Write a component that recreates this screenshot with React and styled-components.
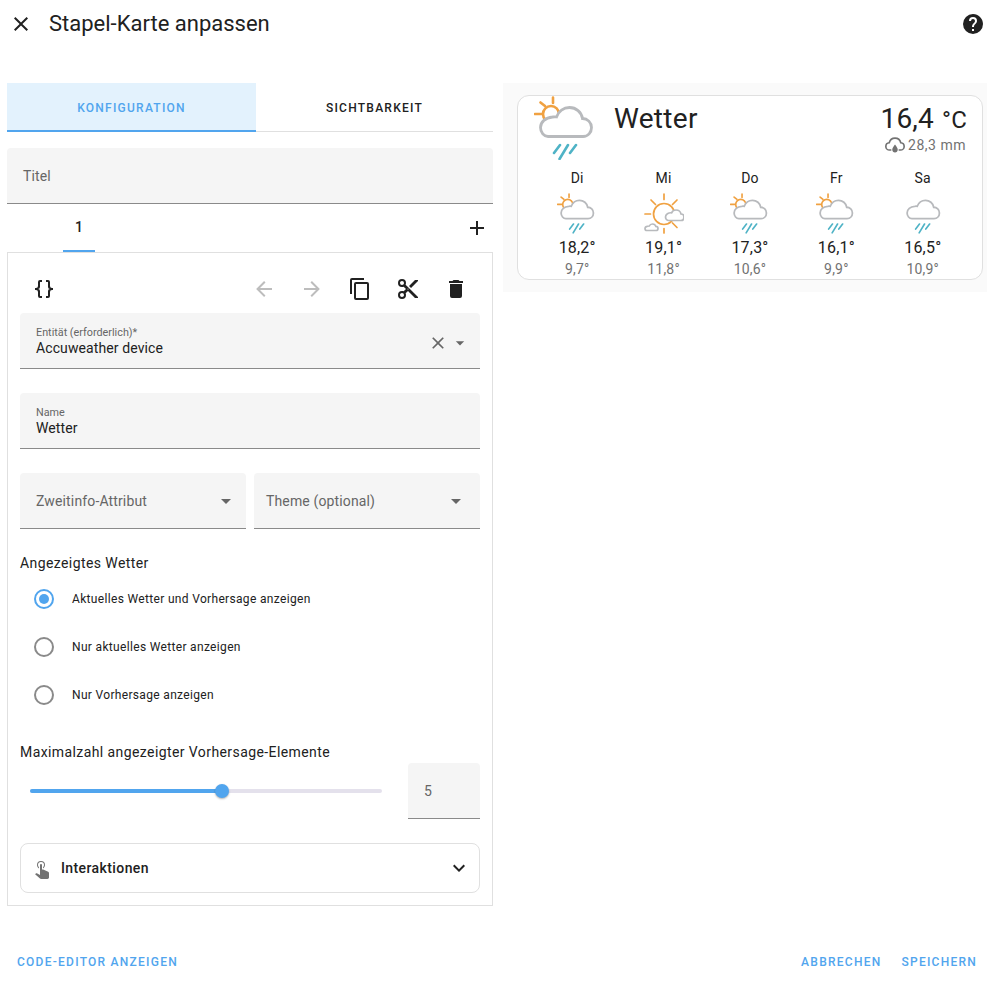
import React from "react";
import styled, { createGlobalStyle } from "styled-components";

const PRIMARY = "#51a5ee";

const GlobalStyle = createGlobalStyle`
  html, body {
    margin: 0;
    padding: 0;
    background: #fff;
    font-family: Roboto, "Liberation Sans", sans-serif;
    color: #212121;
  }
  * { box-sizing: border-box; }
`;

const Page = styled.div`
  width: 987px;
  height: 989px;
  display: flex;
  flex-direction: column;
  overflow: hidden;
`;
const Header = styled.header`
  height: 48px;
  display: flex;
  align-items: center;
  padding: 0 2px 1px 9px;
  margin-bottom: 35px;
`;
const HeaderTitle = styled.h1`
  flex: 1;
  margin: 0 0 0 16px;
  font-size: 22px;
  font-weight: 400;
  line-height: 28px;
`;
const IconBox = styled.span`
  width: ${({ $box }) => $box || 24}px;
  height: ${({ $box }) => $box || 24}px;
  display: inline-flex;
  align-items: center;
  justify-content: center;
  flex: none;
  color: ${({ $color }) => $color || "#212121"};
`;
const Main = styled.main`
  display: flex;
  align-items: flex-start;
  gap: 10px;
  padding-left: 7px;
`;
const LeftColumn = styled.section`
  width: 486px;
  display: flex;
  flex-direction: column;
`;
const Tabs = styled.div`
  display: flex;
  height: 49px;
  border-bottom: 1px solid #e0e0e0;
  margin-bottom: 16px;
`;
const Tab = styled.div`
  width: ${({ $width }) => $width}px;
  height: 49px;
  display: flex;
  align-items: center;
  justify-content: center;
  font-size: 12px;
  font-weight: 500;
  letter-spacing: 1.25px;
  text-transform: uppercase;
  color: ${({ $active }) => ($active ? PRIMARY : "#212121")};
  background: ${({ $active }) => ($active ? "#e3f2fd" : "transparent")};
  border-bottom: ${({ $active }) => ($active ? `2px solid ${PRIMARY}` : "0")};
  padding-top: ${({ $active }) => ($active ? "2px" : "0")};
`;
const Field = styled.div`
  height: 56px;
  background: #f5f5f5;
  border-radius: 4px 4px 0 0;
  border-bottom: 1px solid #8a8a8a;
  padding: 0 ${({ $padRight }) => $padRight ?? 16}px 0 ${({ $padLeft }) => $padLeft ?? 16}px;
  display: flex;
  align-items: center;
  justify-content: space-between;
  flex: ${({ $grow }) => ($grow ? 1 : "none")};
`;
const FieldStack = styled.div`
  display: flex;
  flex-direction: column;
  padding-top: 2px;
`;
const FloatLabel = styled.span`
  font-size: 10.8px;
  line-height: 14px;
  color: #666;
`;
const FieldValue = styled.span`
  font-size: 14px;
  line-height: 18px;
  letter-spacing: 0.1px;
  margin-top: -1px;
  color: #212121;
`;
const Placeholder = styled.span`
  font-size: 14px;
  letter-spacing: 0.14px;
  color: #666;
`;
const FieldIcons = styled.div`
  display: flex;
  align-items: center;
  gap: 1px;
  margin-right: -7px;
  margin-top: 4px;
`;
const CardTabs = styled.div`
  height: 48px;
  display: flex;
  align-items: center;
  justify-content: space-between;
  padding: 0 4px 0 56px;
`;
const CardTab = styled.div`
  width: 32px;
  height: 48px;
  display: flex;
  align-items: center;
  justify-content: center;
  font-size: 14px;
  font-weight: 500;
  border-bottom: 2px solid ${PRIMARY};
`;
const EditorCard = styled.div`
  height: 654px;
  border: 1px solid #e0e0e0;
  padding: 12px 12px 0;
  display: flex;
  flex-direction: column;
`;
const Toolbar = styled.div`
  height: 48px;
  display: flex;
  align-items: center;
  padding: 0 0 0 12px;
`;
const ToolbarRight = styled.div`
  margin-left: auto;
  display: flex;
  align-items: center;
`;
const Row = styled.div`
  display: flex;
  gap: 8px;
`;
const Stacked = styled.div`
  margin-top: 24px;
`;
const SectionLabel = styled.div`
  font-size: 14px;
  line-height: 20px;
  letter-spacing: 0.41px;
  margin-top: ${({ $top }) => $top}px;
`;
const RadioList = styled.div`
  display: flex;
  flex-direction: column;
  margin-top: 2px;
`;
const RadioRow = styled.div`
  height: 48px;
  display: flex;
  align-items: center;
  padding-left: 14px;
  gap: 18px;
  font-size: 12px;
  letter-spacing: 0.33px;
`;
const RadioCircle = styled.span`
  width: 20px;
  height: 20px;
  border-radius: 50%;
  border: 2px solid ${({ $checked }) => ($checked ? PRIMARY : "#8a8a8a")};
  display: flex;
  align-items: center;
  justify-content: center;
  flex: none;
  &::after {
    content: "";
    width: 10px;
    height: 10px;
    border-radius: 50%;
    background: ${({ $checked }) => ($checked ? PRIMARY : "transparent")};
  }
`;
const SliderRow = styled.div`
  display: flex;
  align-items: center;
  padding-left: 10px;
  gap: 26px;
  margin-top: 1px;
`;
const SliderTrack = styled.div`
  position: relative;
  width: 352px;
  height: 4px;
  border-radius: 2px;
  background: #e4e1ec;
`;
const SliderFill = styled.div`
  height: 4px;
  border-radius: 2px;
  background: ${PRIMARY};
`;
const SliderThumb = styled.div`
  position: absolute;
  top: -5px;
  width: 14px;
  height: 14px;
  margin-left: -7px;
  border-radius: 50%;
  background: ${PRIMARY};
  box-shadow: 0 1px 2px rgba(0, 0, 0, 0.3);
`;
const NumberField = styled(Field)`
  width: 72px;
  font-size: 14px;
  color: #666;
`;
const Expansion = styled.div`
  height: 50px;
  margin-top: 24px;
  border: 1px solid #e0e0e0;
  border-radius: 8px;
  display: flex;
  align-items: center;
  padding: 0 8px 0 9px;
`;
const ExpansionTitle = styled.span`
  flex: 1;
  margin-left: 7px;
  font-size: 14px;
  font-weight: 500;
  letter-spacing: 0.4px;
`;
const Footer = styled.footer`
  margin-top: auto;
  height: 54px;
  display: flex;
  align-items: center;
  padding: 0 10px 0 17px;
`;
const FooterRight = styled.div`
  margin-left: auto;
  display: flex;
  gap: 20px;
`;
const TextButton = styled.span`
  font-size: 12px;
  font-weight: 500;
  letter-spacing: 1.25px;
  text-transform: uppercase;
  color: ${PRIMARY};
`;
const Preview = styled.aside`
  width: 484px;
  height: 209px;
  background: #fafafa;
  padding: 12px 4px 12px 14px;
`;
const WeatherCard = styled.article`
  height: 185px;
  background: #fff;
  border: 1px solid #e0e0e0;
  border-radius: 12px;
  display: flex;
  flex-direction: column;
`;
const WeatherTop = styled.div`
  height: 66px;
  display: flex;
  padding: 0 15px 0 16px;
`;
const WeatherName = styled.div`
  margin-left: 20px;
  margin-top: 7px;
  font-size: 28px;
  line-height: 32px;
  letter-spacing: 0.3px;
  flex: 1;
`;
const WeatherNow = styled.div`
  display: flex;
  flex-direction: column;
  align-items: flex-end;
  padding-top: 7px;
`;
const NowTemp = styled.div`
  font-size: 28px;
  line-height: 32px;
  letter-spacing: 0.2px;
`;
const NowUnit = styled.span`
  font-size: 24px;
  margin-left: 8px;
`;
const NowRain = styled.div`
  display: flex;
  align-items: center;
  gap: 2px;
  margin: -2px 1px 0 0;
  font-size: 14px;
  line-height: 16px;
  letter-spacing: 0.5px;
  color: #727272;
`;
const Forecast = styled.div`
  display: flex;
  justify-content: space-between;
  padding: 6px 16px 0 16px;
`;
const Day = styled.div`
  width: 86.4px;
  display: flex;
  flex-direction: column;
  align-items: center;
`;
const DayName = styled.div`
  font-size: 14px;
  line-height: 20px;
  letter-spacing: 0.2px;
  margin-bottom: 5px;
`;
const DayIcon = styled.div`
  height: 42px;
  margin-left: ${({ $offset }) => $offset || 0}px;
`;
const DayHigh = styled.div`
  font-size: 16px;
  line-height: 18px;
  letter-spacing: 0.2px;
  margin-top: 4px;
`;
const DayLow = styled.div`
  font-size: 14px;
  line-height: 18px;
  letter-spacing: 0.2px;
  margin-top: 3px;
  color: #727272;
`;

const Mdi = ({ d, size = 24, box, color }) => (
  <IconBox $box={box || size} $color={color}>
    <svg width={size} height={size} viewBox="0 0 24 24" fill="currentColor">
      <path d={d} />
    </svg>
  </IconBox>
);

const paths = {
  close: "M19,6.41L17.59,5L12,10.59L6.41,5L5,6.41L10.59,12L5,17.59L6.41,19L12,13.41L17.59,19L19,17.59L13.41,12L19,6.41Z",
  help: "M15.07,11.25L14.17,12.17C13.45,12.89 13,13.5 13,15H11V14.5C11,13.39 11.45,12.39 12.17,11.67L13.41,10.41C13.78,10.05 14,9.55 14,9C14,7.89 13.1,7 12,7A2,2 0 0,0 10,9H8A4,4 0 0,1 12,5A4,4 0 0,1 16,9C16,9.88 15.64,10.67 15.07,11.25M13,19H11V17H13M12,2A10,10 0 0,0 2,12A10,10 0 0,0 12,22A10,10 0 0,0 22,12C22,6.47 17.5,2 12,2Z",
  plus: "M19,13H13V19H11V13H5V11H11V5H13V11H19V13Z",
  braces: "M8,3A2,2 0 0,0 6,5V9A2,2 0 0,1 4,11H3V13H4A2,2 0 0,1 6,15V19A2,2 0 0,0 8,21H10V19H8V14A2,2 0 0,0 6,12A2,2 0 0,0 8,10V5H10V3M16,3A2,2 0 0,1 18,5V9A2,2 0 0,0 20,11H21V13H20A2,2 0 0,0 18,15V19A2,2 0 0,1 16,21H14V19H16V14A2,2 0 0,1 18,12A2,2 0 0,1 16,10V5H14V3H16Z",
  left: "M20,11V13H8L13.5,18.5L12.08,19.92L4.16,12L12.08,4.08L13.5,5.5L8,11H20Z",
  right: "M4,11V13H16L10.5,18.5L11.92,19.92L19.84,12L11.92,4.08L10.5,5.5L16,11H4Z",
  copy: "M19,21H8V7H19M19,5H8A2,2 0 0,0 6,7V21A2,2 0 0,0 8,23H19A2,2 0 0,0 21,21V7A2,2 0 0,0 19,5M16,1H4A2,2 0 0,0 2,3V17H4V3H16V1Z",
  cut: "M19,3L13,9L15,11L22,4V3M12,12.5A0.5,0.5 0 0,1 11.5,12A0.5,0.5 0 0,1 12,11.5A0.5,0.5 0 0,1 12.5,12A0.5,0.5 0 0,1 12,12.5M6,20A2,2 0 0,1 4,18C4,16.89 4.9,16 6,16A2,2 0 0,1 8,18C8,19.11 7.1,20 6,20M6,8A2,2 0 0,1 4,6C4,4.89 4.9,4 6,4A2,2 0 0,1 8,6C8,7.11 7.1,8 6,8M9.64,7.64C9.87,7.14 10,6.59 10,6A4,4 0 0,0 6,2A4,4 0 0,0 2,6A4,4 0 0,0 6,10C6.59,10 7.14,9.87 7.64,9.64L10,12L7.64,14.36C7.14,14.13 6.59,14 6,14A4,4 0 0,0 2,18A4,4 0 0,0 6,22A4,4 0 0,0 10,18C10,17.41 9.87,16.86 9.64,16.36L12,14L19,21H22V20L9.64,7.64Z",
  trash: "M19,4H15.5L14.5,3H9.5L8.5,4H5V6H19M6,19A2,2 0 0,0 8,21H16A2,2 0 0,0 18,19V7H6V19Z",
  menuDown: "M7,10L12,15L17,10H7Z",
  chevron: "M7.41,8.58L12,13.17L16.59,8.58L18,10L12,16L6,10L7.41,8.58Z",
  tap: "M10,9A1,1 0 0,1 11,8A1,1 0 0,1 12,9V13.47L13.21,13.6L18.15,15.79C18.68,16.03 19,16.56 19,17.14V21.5C18.97,22.32 18.32,22.97 17.5,23H11C10.62,23 10.26,22.85 10,22.57L5.1,18.37L5.84,17.6C6.03,17.39 6.3,17.28 6.58,17.28H6.8L10,19V9M11,5A4,4 0 0,1 15,9C15,10.5 14.2,11.77 13,12.46V11.24C13.61,10.69 14,9.89 14,9A3,3 0 0,0 11,6A3,3 0 0,0 8,9C8,9.89 8.39,10.69 9,11.24V12.46C7.8,11.77 7,10.5 7,9A4,4 0 0,1 11,5Z",
};

const CLOUD = "M14 40.5H49C54 40.5 57.5 36.5 57.5 31.5C57.5 26.5 53.5 22.5 48.5 22.5C47.5 16 42 11.5 35.5 11.5C29.5 11.5 24.5 15.5 22.5 21C21.5 20.8 20 20.8 18.5 21C11.5 21.5 6.5 26 6.5 31.5C6.5 36.5 10 40.5 14 40.5Z";

// the rainy family, drawn once and scaled for the forecast
const RainyIcon = ({ width = 60, sun = true }) => (
  <svg width={width} height={(width * 64) / 60} viewBox="0 0 60 64" fill="none" strokeLinecap="round">
    {sun && (
      <g stroke="#f0a141" strokeWidth="2.6">
        <circle cx="17" cy="18" r="8" />
        <path d="M19 1.5V7M6.5 6.5L11 10M0.8 18H8" />
      </g>
    )}
    <path d={CLOUD} fill="#fff" stroke="#b8babd" strokeWidth="2.8" />
    <g stroke="#4fb3c6" strokeWidth="2.6">
      <path d="M20 57L26 49M25.5 63L34 49M36 57L42 49" />
    </g>
  </svg>
);

const SunnyCloudyIcon = () => (
  <svg width="40" height="41" viewBox="0 0 40 41" fill="none" strokeLinecap="round">
    <g stroke="#f0a141" strokeWidth="1.7">
      <circle cx="20" cy="21" r="10.5" />
      <path d="M20 1V6.5M20 35.5V40M1 21H6.5M7 7L11.5 11.5M33 7L28.5 11.5M28.5 30L33 34.5" />
    </g>
    <path
      d="M24.5 27.5H37C39 27.5 40 26 40 24C40 22.3 38.7 21 37 21C36.5 18.5 34.5 17 32 17C30 17 28.4 18 27.6 19.8C24.5 19.5 21.5 21.3 21.5 24C21.5 26 23 27.5 24.5 27.5Z"
      fill="#fff"
      stroke="#b8babd"
      strokeWidth="1.7"
    />
    <path
      d="M3 37.5H12C13.2 37.5 14 36.6 14 35.4C14 34.2 13 33.3 11.8 33.3C11.3 31.7 10 31 8.5 31C7 31 5.8 31.8 5.3 33C3 33 1 34 1 35.4C1 36.6 2 37.5 3 37.5Z"
      fill="#fff"
      stroke="#b8babd"
      strokeWidth="1.7"
    />
  </svg>
);

const RainMeter = () => (
  <svg width="22" height="22" viewBox="0 0 24 24" fill="none">
    <path
      d="M8 17.5H6C3.8 17.5 2 15.7 2 13.5C2 11.4 3.6 9.7 5.7 9.5C6.5 6.6 9 4.5 12 4.5C15 4.5 17.6 6.6 18.3 9.5C20.4 9.7 22 11.4 22 13.5C22 15.7 20.2 17.5 18 17.5H16"
      stroke="#727272"
      strokeWidth="1.8"
    />
    <path
      d="M12 11.5C13.8 14 15 15.5 15 17.2C15 18.9 13.7 20.2 12 20.2C10.3 20.2 9 18.9 9 17.2C9 15.5 10.2 14 12 11.5Z"
      fill="#727272"
    />
  </svg>
);

const days = [
  { name: "Di", high: "18,2°", low: "9,7°", offset: -2, icon: <RainyIcon width={38} /> },
  { name: "Mi", high: "19,1°", low: "11,8°", icon: <SunnyCloudyIcon /> },
  { name: "Do", high: "17,3°", low: "10,6°", offset: -2, icon: <RainyIcon width={38} /> },
  { name: "Fr", high: "16,1°", low: "9,9°", offset: -2, icon: <RainyIcon width={38} /> },
  { name: "Sa", high: "16,5°", low: "10,9°", offset: -2, icon: <RainyIcon width={38} sun={false} /> },
];

const radios = [
  { label: "Aktuelles Wetter und Vorhersage anzeigen", checked: true },
  { label: "Nur aktuelles Wetter anzeigen" },
  { label: "Nur Vorhersage anzeigen" },
];

const sliderValue = 54.5;

const App = () => {
  return (
    <Page>
      <GlobalStyle />
      <Header>
        <Mdi d={paths.close} />
        <HeaderTitle>Stapel-Karte anpassen</HeaderTitle>
        <Mdi d={paths.help} />
      </Header>
      <Main>
        <LeftColumn>
          <Tabs>
            <Tab $active $width={249}>Konfiguration</Tab>
            <Tab $width={237}>Sichtbarkeit</Tab>
          </Tabs>
          <Field>
            <Placeholder>Titel</Placeholder>
          </Field>
          <CardTabs>
            <CardTab>1</CardTab>
            <Mdi d={paths.plus} />
          </CardTabs>
          <EditorCard>
            <Toolbar>
              <Mdi d={paths.braces} />
              <ToolbarRight>
                <Mdi d={paths.left} box={48} color="#bdbdbd" />
                <Mdi d={paths.right} box={48} color="#bdbdbd" />
                <Mdi d={paths.copy} box={48} />
                <Mdi d={paths.cut} box={48} />
                <Mdi d={paths.trash} box={48} />
              </ToolbarRight>
            </Toolbar>
            <Field>
              <FieldStack>
                <FloatLabel>Entität (erforderlich)*</FloatLabel>
                <FieldValue>Accuweather device</FieldValue>
              </FieldStack>
              <FieldIcons>
                <Mdi d={paths.close} size={20} color="#666" />
                <Mdi d={paths.menuDown} size={20} box={22} color="#666" />
              </FieldIcons>
            </Field>
            <Stacked>
              <Field>
                <FieldStack>
                  <FloatLabel>Name</FloatLabel>
                  <FieldValue>Wetter</FieldValue>
                </FieldStack>
              </Field>
            </Stacked>
            <Stacked>
              <Row>
                <Field $grow $padRight={8}>
                  <Placeholder>Zweitinfo-Attribut</Placeholder>
                  <Mdi d={paths.menuDown} size={24} color="#666" />
                </Field>
                <Field $grow $padLeft={12} $padRight={12}>
                  <Placeholder>Theme (optional)</Placeholder>
                  <Mdi d={paths.menuDown} size={24} color="#666" />
                </Field>
              </Row>
            </Stacked>
            <SectionLabel $top={24}>Angezeigtes Wetter</SectionLabel>
            <RadioList>
              {radios.map((radio) => (
                <RadioRow key={radio.label}>
                  <RadioCircle $checked={radio.checked} />
                  {radio.label}
                </RadioRow>
              ))}
            </RadioList>
            <SectionLabel $top={23}>Maximalzahl angezeigter Vorhersage-Elemente</SectionLabel>
            <SliderRow>
              <SliderTrack>
                <SliderFill style={{ width: `${sliderValue}%` }} />
                <SliderThumb style={{ left: `${sliderValue}%` }} />
              </SliderTrack>
              <NumberField>5</NumberField>
            </SliderRow>
            <Expansion>
              <Mdi d={paths.tap} color="#727272" />
              <ExpansionTitle>Interaktionen</ExpansionTitle>
              <Mdi d={paths.chevron} />
            </Expansion>
          </EditorCard>
        </LeftColumn>
        <Preview>
          <WeatherCard>
            <WeatherTop>
              <RainyIcon />
              <WeatherName>Wetter</WeatherName>
              <WeatherNow>
                <NowTemp>
                  16,4<NowUnit>°C</NowUnit>
                </NowTemp>
                <NowRain>
                  <RainMeter />
                  28,3 mm
                </NowRain>
              </WeatherNow>
            </WeatherTop>
            <Forecast>
              {days.map((day) => (
                <Day key={day.name}>
                  <DayName>{day.name}</DayName>
                  <DayIcon $offset={day.offset}>{day.icon}</DayIcon>
                  <DayHigh>{day.high}</DayHigh>
                  <DayLow>{day.low}</DayLow>
                </Day>
              ))}
            </Forecast>
          </WeatherCard>
        </Preview>
      </Main>
      <Footer>
        <TextButton>Code-Editor anzeigen</TextButton>
        <FooterRight>
          <TextButton>Abbrechen</TextButton>
          <TextButton>Speichern</TextButton>
        </FooterRight>
      </Footer>
    </Page>
  );
};

export default App;
